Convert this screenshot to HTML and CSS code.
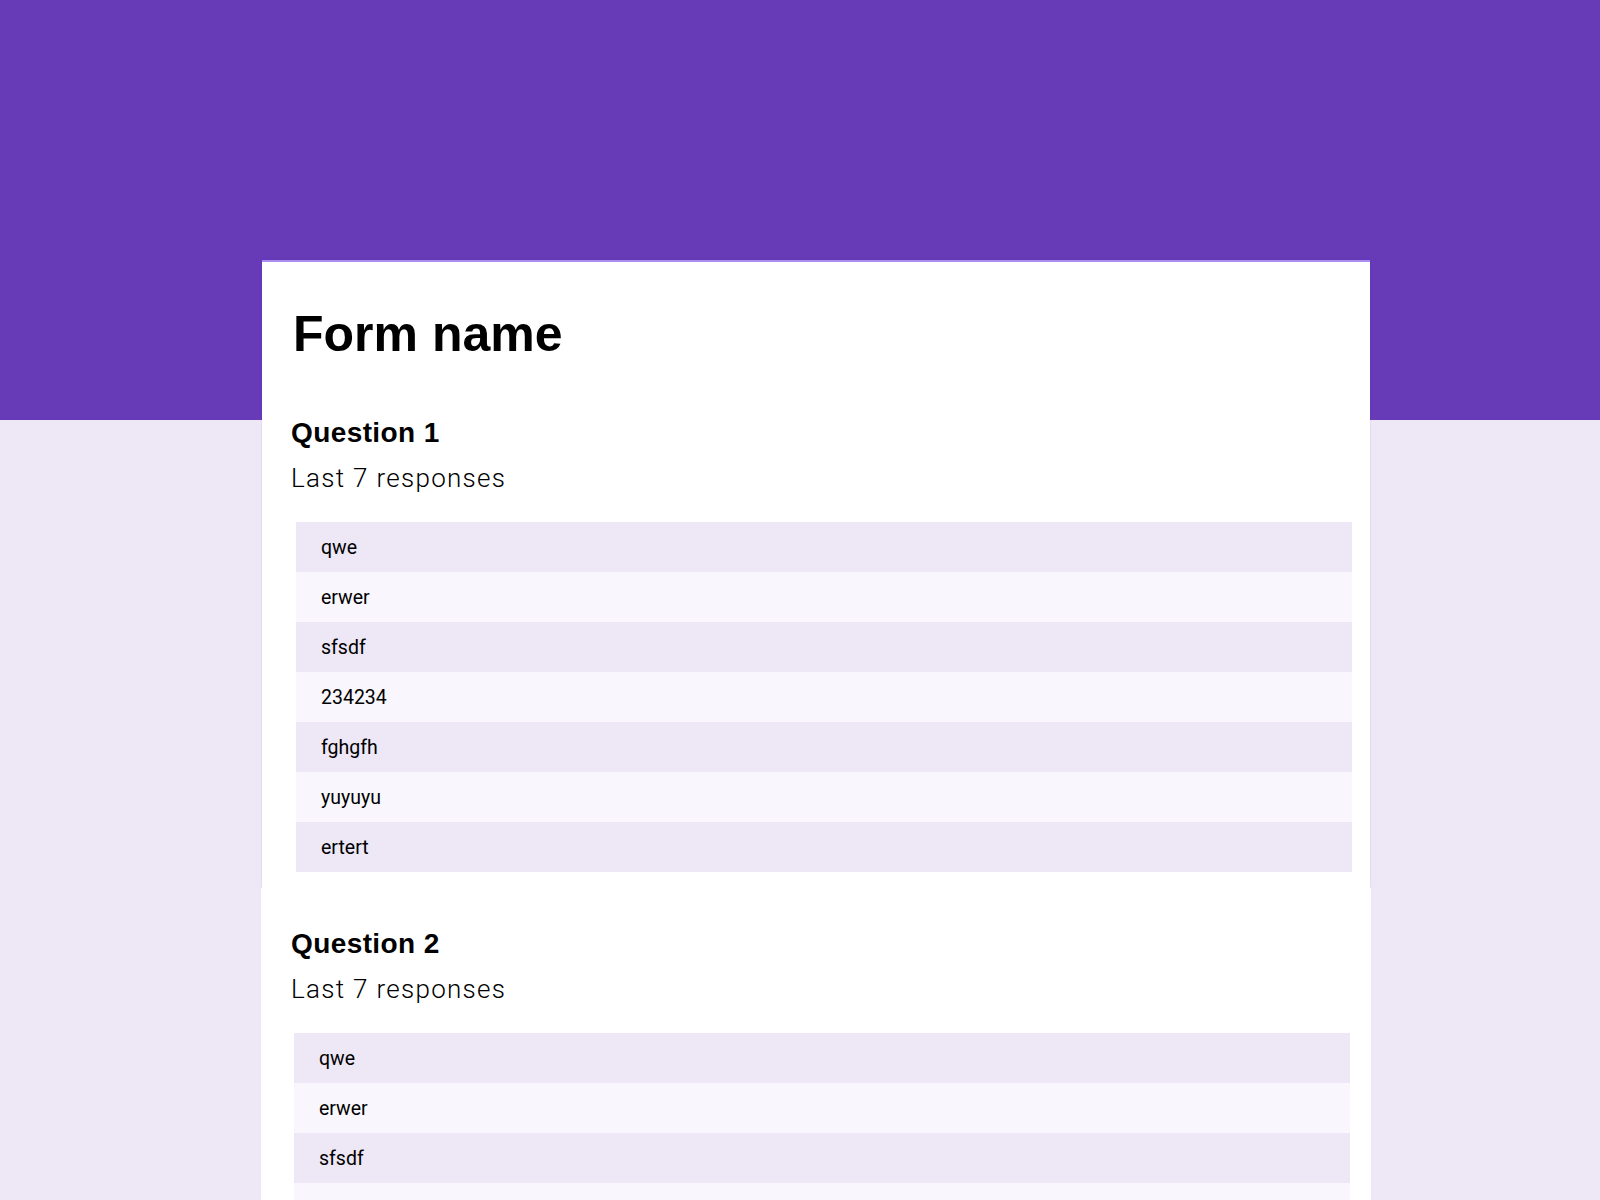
FILE: index.html
```html
<!DOCTYPE html>
<html>
<head>
<meta charset="utf-8">
<link rel="stylesheet" href="styles.css">
</head>
<body>
<div class="header"></div>
<main class="main">
  <section class="card card-first">
    <h1 class="title">Form name</h1>
    <h2 class="question">Question 1</h2>
    <p class="subtitle">Last 7 responses</p>
    <ul class="rows">
      <li class="row">qwe</li>
      <li class="row">erwer</li>
      <li class="row">sfsdf</li>
      <li class="row">234234</li>
      <li class="row">fghgfh</li>
      <li class="row">yuyuyu</li>
      <li class="row">ertert</li>
    </ul>
  </section>
  <section class="card card-second">
    <h2 class="question">Question 2</h2>
    <p class="subtitle">Last 7 responses</p>
    <ul class="rows">
      <li class="row">qwe</li>
      <li class="row">erwer</li>
      <li class="row">sfsdf</li>
      <li class="row">234234</li>
      <li class="row">fghgfh</li>
      <li class="row">yuyuyu</li>
      <li class="row">ertert</li>
    </ul>
  </section>
</main>
</body>
</html>
```

FILE: styles.css
```css
html, body {
  margin: 0;
  padding: 0;
}
body {
  background: #ede7f6;
  font-family: "Liberation Sans", Arial, sans-serif;
  color: #000;
  overflow: hidden;
  height: 1200px;
}
.header {
  height: 420px;
  background: #673ab7;
}
.main {
  margin-top: -160px;
  display: flex;
  flex-direction: column;
  align-items: flex-start;
}
.card {
  background: #fff;
  box-sizing: border-box;
}
.card-first {
  margin-left: 262px;
  width: 1108px;
  border-top: 2px solid #ab8ff0;
  padding: 42px 0 16px 29px;
  box-shadow: 0 0 2px rgba(60, 20, 120, 0.14);
}
.card-second {
  margin-left: 261px;
  width: 1110px;
  padding: 40px 0 16px 30px;
  position: relative;
  z-index: 1;
}
.title {
  margin: 0;
  padding-left: 2px;
  font-size: 50px;
  line-height: 60px;
  font-weight: 700;
}
.question {
  margin: 0;
  font-size: 28px;
  line-height: 32px;
  font-weight: 700;
  letter-spacing: 0.4px;
}
.card-first .question {
  margin-top: 53px;
}
.subtitle {
  margin: 13px 0 0 0;
  font-family: Roboto, "Liberation Sans", sans-serif;
  font-weight: 300;
  font-size: 26px;
  line-height: 32px;
  letter-spacing: 1.3px;
}
.rows {
  list-style: none;
  margin: 28px 0 0 5px;
  padding: 0;
  width: 1056px;
}
.card-second .rows {
  margin-left: 3px;
}
.row {
  height: 50px;
  line-height: 51px;
  padding-left: 25px;
  font-family: Roboto, "Liberation Sans", sans-serif;
  font-size: 19.5px;
  background: #ede7f6;
}
.row:nth-child(even) {
  background: #f9f7fd;
}
```
